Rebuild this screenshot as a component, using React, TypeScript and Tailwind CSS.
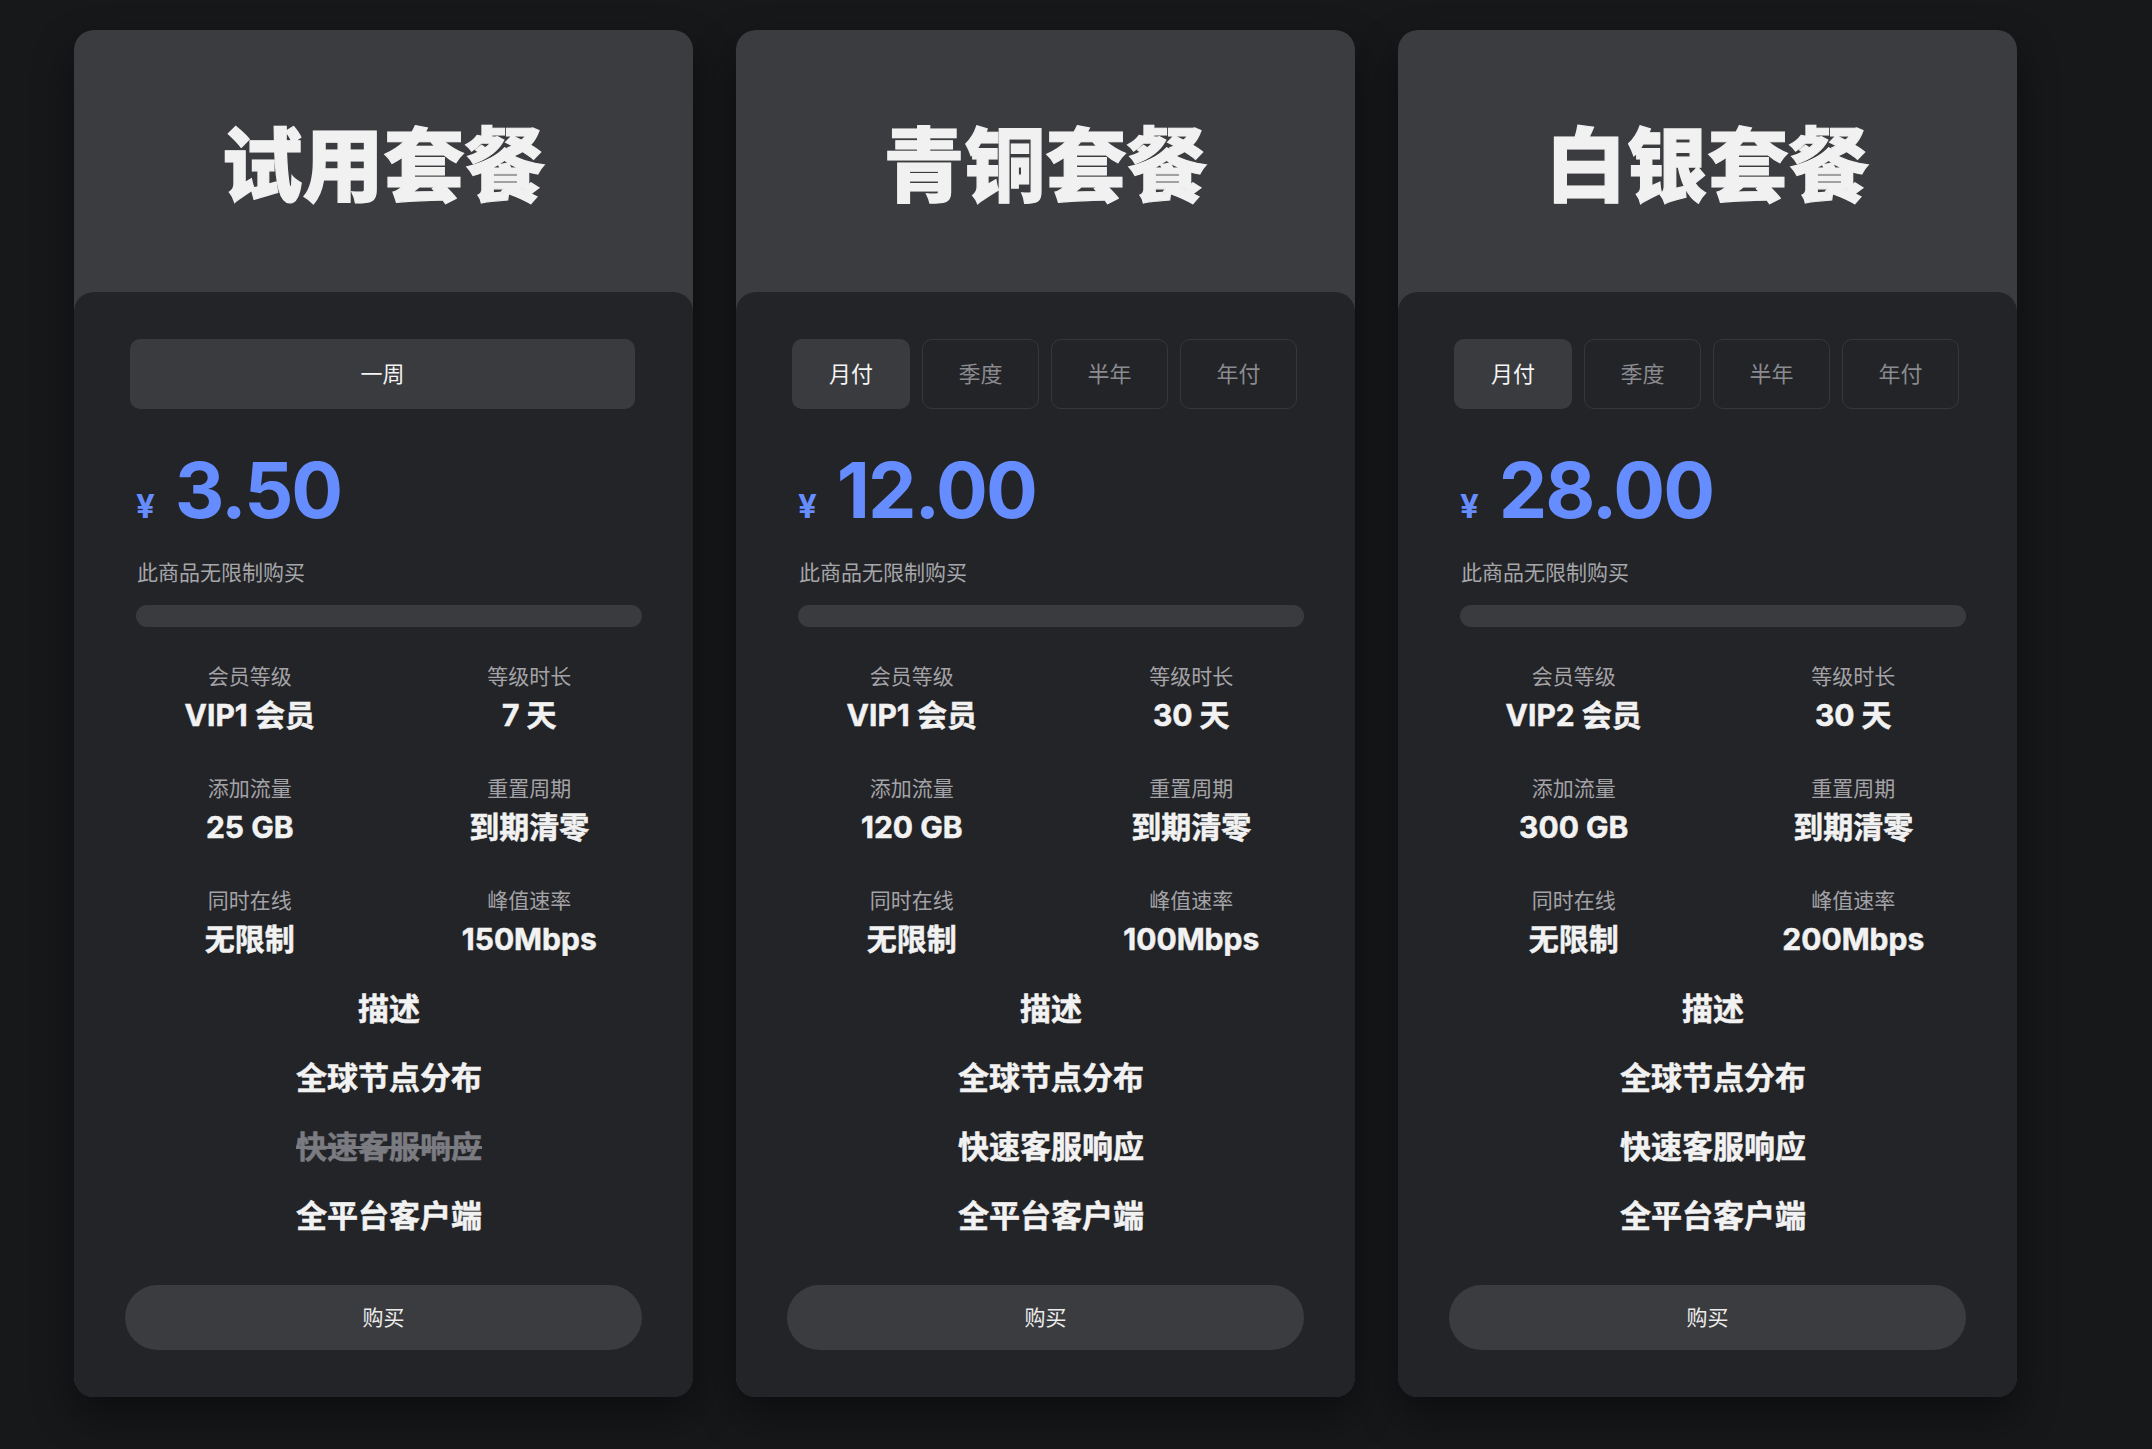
import React from "react";

type Stat = { label: string; value: string };
type Plan = {
  title: string;
  tabs: string[];
  price: string;
  stats: Stat[];
  features: { text: string; off?: boolean }[];
};

const plans: Plan[] = [
  {
    title: "试用套餐",
    tabs: ["一周"],
    price: "3.50",
    stats: [
      { label: "会员等级", value: "VIP1 会员" },
      { label: "等级时长", value: "7 天" },
      { label: "添加流量", value: "25 GB" },
      { label: "重置周期", value: "到期清零" },
      { label: "同时在线", value: "无限制" },
      { label: "峰值速率", value: "150Mbps" },
    ],
    features: [
      { text: "全球节点分布" },
      { text: "快速客服响应", off: true },
      { text: "全平台客户端" },
    ],
  },
  {
    title: "青铜套餐",
    tabs: ["月付", "季度", "半年", "年付"],
    price: "12.00",
    stats: [
      { label: "会员等级", value: "VIP1 会员" },
      { label: "等级时长", value: "30 天" },
      { label: "添加流量", value: "120 GB" },
      { label: "重置周期", value: "到期清零" },
      { label: "同时在线", value: "无限制" },
      { label: "峰值速率", value: "100Mbps" },
    ],
    features: [{ text: "全球节点分布" }, { text: "快速客服响应" }, { text: "全平台客户端" }],
  },
  {
    title: "白银套餐",
    tabs: ["月付", "季度", "半年", "年付"],
    price: "28.00",
    stats: [
      { label: "会员等级", value: "VIP2 会员" },
      { label: "等级时长", value: "30 天" },
      { label: "添加流量", value: "300 GB" },
      { label: "重置周期", value: "到期清零" },
      { label: "同时在线", value: "无限制" },
      { label: "峰值速率", value: "200Mbps" },
    ],
    features: [{ text: "全球节点分布" }, { text: "快速客服响应" }, { text: "全平台客户端" }],
  },
];

function Card({ plan }: { plan: Plan }) {
  const single = plan.tabs.length === 1;
  return (
    <div className="w-[619px] shrink-0 rounded-[20px] bg-[#3b3c3f] shadow-[0_18px_40px_rgba(0,0,0,0.45)] flex flex-col">
      <div className="h-[262px] flex items-center justify-center pt-[10px]">
        <h2 className="text-[81px] leading-none font-black text-[#f1f1f1] [-webkit-text-stroke:1.2px_#f1f1f1]">
          {plan.title}
        </h2>
      </div>
      <div className="rounded-[20px] bg-[#232427] pt-[47px] pb-[47px] px-[51px] flex flex-col">
        <div className="ml-[5px] mr-[7px] flex gap-[12px] h-[70px]">
          {plan.tabs.map((t, i) =>
            i === 0 ? (
              <div
                key={t}
                className={`${single ? "flex-1" : "w-[118px]"} rounded-[10px] bg-[#3a3b3e] flex items-center justify-center text-[22px] text-[#f4f4f4]`}
              >
                {t}
              </div>
            ) : (
              <div
                key={t}
                className="w-[117px] rounded-[10px] border border-[#36373b] flex items-center justify-center text-[22px] text-[#8a8a8f]"
              >
                {t}
              </div>
            )
          )}
        </div>
        <div className="pl-[11px] mt-[41px] flex items-baseline h-[80px]">
          <span className="text-[33px] font-bold text-[#668dff] leading-none mr-[20px]">¥</span>
          <span className="text-[77px] font-bold text-[#668dff] leading-[80px] tracking-[-2px]">{plan.price}</span>
        </div>
        <div className="pl-[12px] mt-[28px] text-[21px] leading-[30px] text-[#a6a6aa]">此商品无限制购买</div>
        <div className="ml-[11px] mt-[17px] h-[22px] rounded-full bg-[#3a3b3e]" />
        <div className="ml-[-15px] mr-[-27px] mt-[36px] grid grid-cols-2 gap-y-[40px]">
          {plan.stats.map((s) => (
            <div key={s.label} className="flex flex-col items-center">
              <div className="text-[21px] leading-[28px] text-[#a3a3a7]">{s.label}</div>
              <div className="mt-[4px] text-[30px] leading-[40px] font-bold text-[#f2f2f2] [-webkit-text-stroke:0.5px_#f2f2f2]">
                {s.value}
              </div>
            </div>
          ))}
        </div>
        <div className="ml-[11px] mt-[15px] flex flex-col items-center text-[31px] leading-[69px] font-bold text-[#f2f2f2] [-webkit-text-stroke:0.5px_#f2f2f2]">
          <div>描述</div>
          {plan.features.map((f) => (
            <div
              key={f.text}
              className={f.off ? "text-[#7b7b82] line-through decoration-[#7b7b82] [-webkit-text-stroke:0.5px_#7b7b82]" : ""}
            >
              {f.text}
            </div>
          ))}
        </div>
        <button className="mt-[35px] h-[65px] rounded-full bg-[#3b3c3f] text-[21px] text-[#ececec]">购买</button>
      </div>
    </div>
  );
}

export default function App() {
  return (
    <div
      className="min-h-[1449px] w-full bg-[#17181a] flex items-start gap-[43px] pl-[74px] pt-[30px]"
      style={{ fontFamily: 'Inter, "Noto Sans CJK SC", sans-serif' }}
    >
      {plans.map((p) => (
        <Card key={p.title} plan={p} />
      ))}
    </div>
  );
}
